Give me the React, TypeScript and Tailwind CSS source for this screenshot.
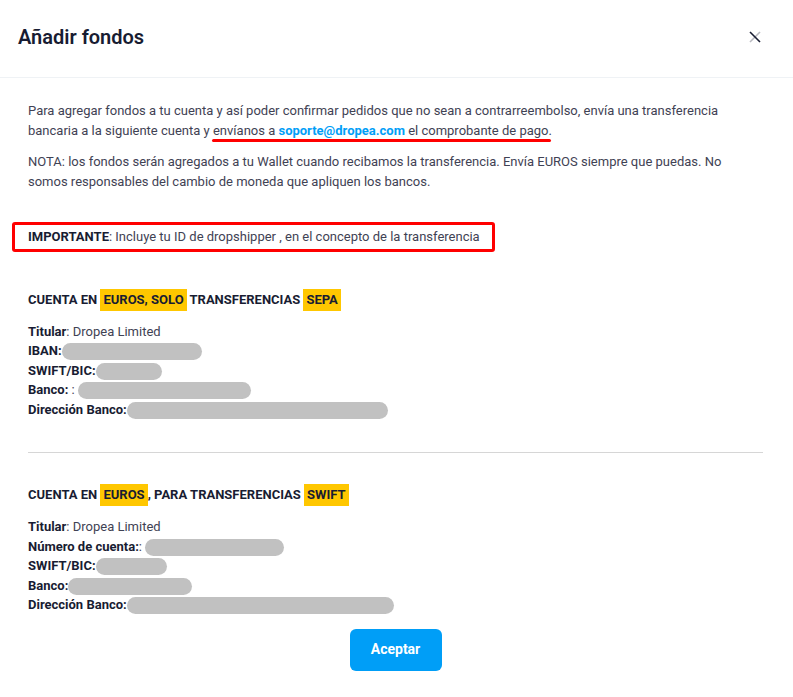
import React from 'react';

type Row = { label: string; value?: string; blank?: number };

const sepaRows: Row[] = [
  { label: 'Titular', value: ': Dropea Limited' },
  { label: 'IBAN:', blank: 140 },
  { label: 'SWIFT/BIC:', blank: 66 },
  { label: 'Banco: ', value: ': ', blank: 173 },
  { label: 'Dirección Banco:', blank: 261 },
];

const swiftRows: Row[] = [
  { label: 'Titular', value: ': Dropea Limited' },
  { label: 'Número de cuenta:', value: ': ', blank: 139 },
  { label: 'SWIFT/BIC:', blank: 71 },
  { label: 'Banco:', blank: 124 },
  { label: 'Dirección Banco:', blank: 267 },
];

function Mark({ children }: { children: React.ReactNode }) {
  return <span className="inline-block bg-[#ffc700] px-[3px] leading-[22px]">{children}</span>;
}

function Rows({ rows }: { rows: Row[] }) {
  return (
    <div className="mt-[11px]">
      {rows.map((r, i) => (
        <div key={i}>
          <span className="font-bold text-[#181c32]">{r.label}</span>
          {r.value}
          {r.blank && (
            <span
              className="inline-block h-[17px] rounded-full bg-[#c1c1c1] align-middle"
              style={{ width: r.blank }}
            />
          )}
        </div>
      ))}
    </div>
  );
}

export default function App() {
  return (
    <div className="min-h-screen bg-white font-['Roboto','Liberation_Sans',sans-serif]">
      {/* Header */}
      <div className="flex h-[78px] items-center justify-between border-b border-[#eff2f5] pb-[4px] pl-[18px] pr-[26px]">
        <h2 className="text-[20px] font-semibold text-[#181c32]">Añadir fondos</h2>
        <button className="flex h-6 w-6 items-center justify-center">
          <svg width="12" height="12" viewBox="0 0 12 12">
            <line x1="1" y1="1" x2="11" y2="11" stroke="#181c32" strokeWidth="1.6" />
            <line x1="11" y1="1" x2="1" y2="11" stroke="#181c32" strokeOpacity="0.3" strokeWidth="1.6" />
          </svg>
        </button>
      </div>

      {/* Body */}
      <div className="pl-7 pr-[30px] pt-[23px] pb-6 text-[13px] leading-[1.5] text-[#3f4254]">
        <p className="mb-3">
          Para agregar fondos a tu cuenta y así poder confirmar pedidos que no sean a contrarreembolso, envía una
          transferencia bancaria a la siguiente cuenta y{' '}
          <span className="relative">
            envíanos a <span className="font-bold text-[#009ef7]">soporte@dropea.com</span> el comprobante de pago.
            <span className="absolute bottom-[-4px] left-[-1px] right-[1px] h-[3px] rounded-full bg-[#ff0000]" />
          </span>
        </p>
        <p>
          NOTA: los fondos serán agregados a tu Wallet cuando recibamos la transferencia. Envía EUROS siempre que
          puedas. No somos responsables del cambio de moneda que apliquen los bancos.
        </p>

        <div className="-ml-4 mt-[31px] w-fit rounded-[3px] border-[3px] border-[#ff0000] py-[2px] pl-[13px] pr-3">
          <span className="font-bold text-[#181c32]">IMPORTANTE</span>: Incluye tu ID de dropshipper , en el concepto de
          la transferencia
        </div>

        {/* SEPA */}
        <div className="mt-[37px] font-bold uppercase leading-[22px] text-[#181c32]">
          CUENTA EN <Mark>EUROS, SOLO</Mark> TRANSFERENCIAS <Mark>SEPA</Mark>
        </div>
        <Rows rows={sepaRows} />

        <div className="mt-[33px] border-t border-[#d6d6d6]" />

        {/* SWIFT */}
        <div className="mt-[31px] font-bold uppercase leading-[22px] text-[#181c32]">
          CUENTA EN <Mark>EUROS</Mark>, PARA TRANSFERENCIAS <Mark>SWIFT</Mark>
        </div>
        <Rows rows={swiftRows} />

        <button className="mx-auto mt-[14px] block h-[42px] w-[92px] rounded-md bg-[#009ef7] text-[14px] font-bold text-white">
          Aceptar
        </button>
      </div>
    </div>
  );
}
